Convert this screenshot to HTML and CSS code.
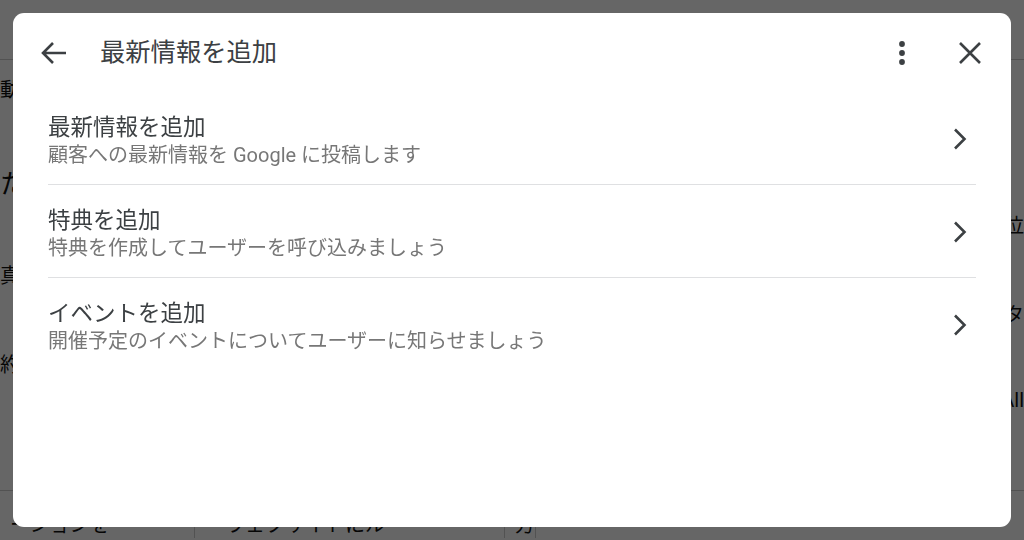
FILE: index.html
```html
<!DOCTYPE html>
<html lang="ja">
<head>
<meta charset="utf-8">
<title>最新情報を追加</title>
<link rel="stylesheet" href="styles.css">
</head>
<body>
<div class="page">
  <div class="page-top"></div>
  <div class="page-mid">
    <div class="side">
      <span class="frag">動</span>
      <span class="frag big">た</span>
      <span class="frag">真</span>
      <span class="frag">約</span>
    </div>
    <div class="main-bg"></div>
    <div class="side right">
      <span class="frag">位</span>
      <span class="frag">ボタ</span>
      <span class="frag">All</span>
    </div>
  </div>
  <div class="page-bottom">
    <span class="cell first">ーションを</span>
    <span class="cell second">ウェブサイトにル</span>
    <span class="cell">方</span>
  </div>
</div>
<div class="scrim"></div>
<div class="dialog" role="dialog">
  <div class="dialog-header">
    <button class="icon-btn" aria-label="戻る">
      <svg width="26" height="24" viewBox="0 0 26 24"><path d="M25 12H3M12 2L2 12l10 10" fill="none" stroke="#3c4043" stroke-width="2.6"/></svg>
    </button>
    <h1 class="dialog-title">最新情報を追加</h1>
    <button class="icon-btn" aria-label="その他">
      <svg width="8" height="24" viewBox="0 0 8 24"><circle cx="4" cy="3" r="2.9" fill="#3c4043"/><circle cx="4" cy="12" r="2.9" fill="#3c4043"/><circle cx="4" cy="21" r="2.9" fill="#3c4043"/></svg>
    </button>
    <button class="icon-btn close" aria-label="閉じる">
      <svg width="22" height="22" viewBox="0 0 22 22"><path d="M1 1l20 20M21 1L1 21" fill="none" stroke="#3c4043" stroke-width="2.6"/></svg>
    </button>
  </div>
  <ul class="options">
    <li class="option">
      <div class="option-text">
        <div class="option-title">最新情報を追加</div>
        <div class="option-sub">顧客への最新情報を Google に投稿します</div>
      </div>
      <svg class="chev" width="14" height="22" viewBox="0 0 14 22"><path d="M2 1.5l9.5 9.5L2 20.5" fill="none" stroke="#3c4043" stroke-width="2.6"/></svg>
    </li>
    <li class="option">
      <div class="option-text">
        <div class="option-title">特典を追加</div>
        <div class="option-sub">特典を作成してユーザーを呼び込みましょう</div>
      </div>
      <svg class="chev" width="14" height="22" viewBox="0 0 14 22"><path d="M2 1.5l9.5 9.5L2 20.5" fill="none" stroke="#3c4043" stroke-width="2.6"/></svg>
    </li>
    <li class="option">
      <div class="option-text">
        <div class="option-title">イベントを追加</div>
        <div class="option-sub">開催予定のイベントについてユーザーに知らせましょう</div>
      </div>
      <svg class="chev" width="14" height="22" viewBox="0 0 14 22"><path d="M2 1.5l9.5 9.5L2 20.5" fill="none" stroke="#3c4043" stroke-width="2.6"/></svg>
    </li>
  </ul>
</div>
</body>
</html>
```
FILE: styles.css
```css
* { box-sizing: border-box; }
html, body {
  margin: 0;
  padding: 0;
  width: 1024px;
  height: 540px;
  overflow: hidden;
}
body {
  font-family: Roboto, "Noto Sans CJK JP", sans-serif;
  background: #fff;
}
.page {
  height: 540px;
  display: flex;
  flex-direction: column;
  background: #fff;
  color: #111;
}
.page-top {
  height: 60px;
  border-bottom: 1px solid #ccc;
}
.page-mid {
  flex: 1;
  display: flex;
  justify-content: space-between;
}
.side {
  width: 24px;
  display: flex;
  flex-direction: column;
  gap: 60px;
  padding-top: 14px;
  font-size: 20px;
}
.side.right {
  padding-top: 150px;
  align-items: flex-end;
}
.frag { white-space: nowrap; }
.frag.big { font-size: 26px; }
.main-bg { flex: 1; }
.page-bottom {
  height: 50px;
  display: flex;
  align-items: flex-end;
  padding-bottom: 2px;
  font-size: 20px;
  border-top: 1px solid #ccc;
}
.cell {
  padding-left: 10px;
  border-right: 1px solid #ccc;
}
.cell.first { width: 195px; }
.cell.second { width: 310px; padding-left: 30px; }
.scrim {
  position: fixed;
  inset: 0;
  background: rgba(0, 0, 0, 0.6);
}
.dialog {
  position: fixed;
  left: 13px;
  top: 13px;
  width: 998px;
  height: 514px;
  background: #fff;
  border-radius: 11px;
  display: flex;
  flex-direction: column;
}
.dialog-header {
  height: 79px;
  display: flex;
  align-items: center;
  padding: 0 17px;
}
.icon-btn {
  width: 48px;
  height: 48px;
  border: 0;
  background: none;
  padding: 0;
  display: flex;
  align-items: center;
  justify-content: center;
}
.close { margin-left: 20px; }
.dialog-title {
  flex: 1;
  margin: 0 0 0 22px;
  font-size: 25.3px;
  font-weight: 400;
  color: #3c4043;
  line-height: 32px;
}
.options {
  list-style: none;
  margin: 0;
  padding: 0 35px;
}
.option {
  display: flex;
  align-items: center;
  padding: 21px 0 15px;
  border-bottom: 1.5px solid #dfe0e2;
}
.option:last-child { border-bottom: 0; }
.option-text { flex: 1; }
.option-title {
  font-size: 22.5px;
  line-height: 28px;
  color: #3c4043;
}
.option-sub {
  font-size: 20px;
  line-height: 28px;
  color: #777;
}
.chev {
  margin-right: 9px;
  margin-top: -4px;
}
```
